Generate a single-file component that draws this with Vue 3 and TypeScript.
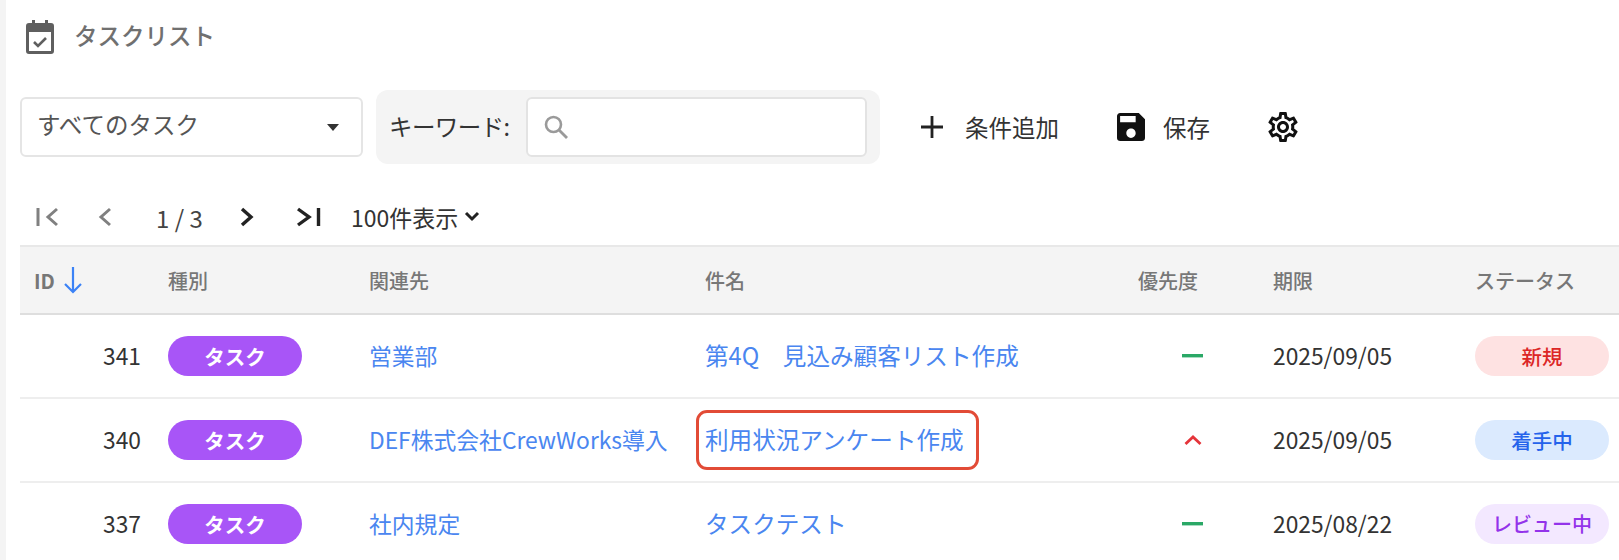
<script setup lang="ts">
interface Row { id: number; rel: string; title: string; pri: 'low' | 'high'; due: string; status: string; cls: string; boxed?: boolean }
const rows: Row[] = [
  { id: 341, rel: '営業部', title: '第4Q　見込み顧客リスト作成', pri: 'low', due: '2025/09/05', status: '新規', cls: 'new' },
  { id: 340, rel: 'DEF株式会社CrewWorks導入', title: '利用状況アンケート作成', pri: 'high', due: '2025/09/05', status: '着手中', cls: 'doing', boxed: true },
  { id: 337, rel: '社内規定', title: 'タスクテスト', pri: 'low', due: '2025/08/22', status: 'レビュー中', cls: 'review' },
]
</script>

<template>
  <div class="page">
    <div class="title">
      <svg class="cal" width="30" height="36" viewBox="0 0 30 36">
        <path fill="#5f5f5f" d="M7 1h3v3h10V1h3v3h3a3 3 0 0 1 3 3v25a3 3 0 0 1-3 3H4a3 3 0 0 1-3-3V7a3 3 0 0 1 3-3h3z" />
        <rect x="4" y="13" width="22" height="19" fill="#fff" />
        <path d="M9 23l4 4 8-8" fill="none" stroke="#5f5f5f" stroke-width="2.6" />
      </svg>
      <span>タスクリスト</span>
    </div>
    <div class="toolbar">
      <div class="select">
        <span>すべてのタスク</span>
        <i class="caret"></i>
      </div>
      <div class="kw">
        <label>キーワード:</label>
        <div class="input">
          <svg width="26" height="26" viewBox="0 0 26 26">
            <circle cx="10.500" cy="10.500" r="7.500" fill="none" stroke="#9a9a9a" stroke-width="2.600" />
            <path d="M16 16l8 8" stroke="#9a9a9a" stroke-width="2.800" />
          </svg>
        </div>
      </div>
      <button class="act add">
        <svg width="24" height="24" viewBox="0 0 24 24"><path d="M12 1v22M1 12h22" stroke="#222" stroke-width="2.800" /></svg>
        <span>条件追加</span>
      </button>
      <button class="act save">
        <svg width="28" height="28" viewBox="3 3 18 18"><path fill="#111" d="M17 3H5c-1.110 0-2 .9-2 2v14c0 1.100.89 2 2 2h14c1.100 0 2-.9 2-2V7l-4-4zm-5 16c-1.660 0-3-1.340-3-3s1.340-3 3-3 3 1.340 3 3-1.340 3-3 3zm3-10H5V5h10v4z" /></svg>
        <span>保存</span>
      </button>
      <button class="gear">
        <svg width="30" height="30" viewBox="2 2 20 20"><path fill="#111" d="M19.430 12.980c.04-.32.07-.64.07-.98 0-.34-.03-.66-.07-.98l2.110-1.650c.19-.15.24-.42.12-.64l-2-3.460c-.09-.16-.26-.25-.44-.25-.06 0-.12.01-.17.03l-2.490 1c-.52-.4-1.080-.73-1.690-.98l-.38-2.650C14.460 2.180 14.250 2 14 2h-4c-.25 0-.46.18-.49.42l-.38 2.650c-.61.25-1.170.59-1.690.98l-2.490-1c-.06-.02-.12-.03-.18-.03-.17 0-.34.09-.43.25l-2 3.460c-.13.22-.07.49.12.64l2.110 1.650c-.04.32-.07.65-.07.98 0 .33.03.66.07.98l-2.110 1.650c-.19.15-.24.42-.12.64l2 3.460c.09.16.26.25.44.25.06 0 .12-.01.17-.03l2.490-1c.52.4 1.080.73 1.690.98l.38 2.650c.03.24.24.42.49.42h4c.25 0 .46-.18.49-.42l.38-2.650c.61-.25 1.170-.59 1.690-.98l2.490 1c.06.02.12.03.18.03.17 0 .34-.09.43-.25l2-3.460c.12-.22.07-.49-.12-.64l-2.110-1.650zm-1.980-1.710c.04.31.05.52.05.73 0 .21-.02.43-.05.73l-.14 1.130.89.7 1.080.84-.7 1.210-1.270-.51-1.040-.42-.9.68c-.43.32-.84.56-1.250.73l-1.060.43-.16 1.130-.2 1.350h-1.400l-.19-1.350-.16-1.130-1.060-.43c-.43-.18-.83-.41-1.230-.71l-.91-.7-1.060.43-1.270.51-.7-1.210 1.080-.84.89-.7-.14-1.130c-.03-.31-.05-.54-.05-.74s.02-.43.05-.73l.14-1.130-.89-.7-1.080-.84.7-1.210 1.270.51 1.040.42.9-.68c.43-.32.84-.56 1.250-.73l1.060-.43.16-1.130.2-1.350h1.390l.19 1.350.16 1.130 1.060.43c.43.18.83.41 1.230.71l.91.7 1.060-.43 1.270-.51.7 1.210-1.070.85-.89.7.14 1.130zM12 8c-2.210 0-4 1.790-4 4s1.790 4 4 4 4-1.790 4-4-1.790-4-4-4zm0 6c-1.100 0-2-.9-2-2s.9-2 2-2 2 .9 2 2-.9 2-2 2z" /></svg>
      </button>
    </div>
    <div class="pager">
      <svg class="first" width="26" height="24" viewBox="0 0 26 24"><path d="M3 3v18M22 4l-9 8 9 8" fill="none" stroke="#808080" stroke-width="3" /></svg>
      <svg class="prev" width="16" height="24" viewBox="0 0 16 24"><path d="M13 4l-9 8 9 8" fill="none" stroke="#808080" stroke-width="3" /></svg>
      <span class="count">1 / 3</span>
      <svg class="next" width="16" height="24" viewBox="0 0 16 24"><path d="M3 4l9 8-9 8" fill="none" stroke="#222" stroke-width="3.400" /></svg>
      <svg class="last" width="26" height="24" viewBox="0 0 26 24"><path d="M3 4l11 8-11 8M23.500 3v18" fill="none" stroke="#222" stroke-width="3.400" /></svg>
      <span class="size">100件表示</span>
      <svg width="16" height="12" viewBox="0 0 16 12"><path d="M2 2l6 6 6-6" fill="none" stroke="#222" stroke-width="3" /></svg>
    </div>
    <div class="table">
      <div class="row head">
        <div class="c id-h">ID
          <svg width="20" height="28" viewBox="0 0 20 28"><path d="M10 1v25M2 18l8 8 8-8" fill="none" stroke="#3b82f6" stroke-width="2.200" /></svg>
        </div>
        <div class="c">種別</div>
        <div class="c">関連先</div>
        <div class="c">件名</div>
        <div class="c pri-h">優先度</div>
        <div class="c">期限</div>
        <div class="c">ステータス</div>
      </div>
      <div v-for="r in rows" :key="r.id" class="row body">
        <div class="c num">{{ r.id }}</div>
        <div class="c"><span class="pill task">タスク</span></div>
        <div class="c link rel">{{ r.rel }}</div>
        <div class="c link subject">
          <span>{{ r.title }}</span>
          <i v-if="r.boxed" class="mark"></i>
        </div>
        <div class="c pri">
          <svg v-if="r.pri === 'low'" width="21" height="4" viewBox="0 0 21 4"><rect width="21" height="3.400" fill="#2aa866" /></svg>
          <svg v-else width="20" height="12" viewBox="0 0 20 12"><path d="M2.500 10l7.500-7 7.500 7" fill="none" stroke="#e5343a" stroke-width="2.800" /></svg>
        </div>
        <div class="c date">{{ r.due }}</div>
        <div class="c"><span class="pill" :class="r.cls">{{ r.status }}</span></div>
      </div>
    </div>
  </div>
</template>

<style>
html, body { margin: 0; background: #fff; }
</style>
<style scoped>
.page { width: 1619px; height: 560px; box-sizing: border-box; overflow: hidden; padding-left: 6px; background: linear-gradient(90deg, #f4f4f4 6px, #fff 6px); font-family: "Noto Sans CJK JP", "Noto Sans", sans-serif; color: #333; font-size: 23px; }
.title { height: 73px; display: flex; align-items: center; gap: 19px; padding-left: 19px; font-size: 23.500px; font-weight: 500; color: #707070; }
.title span { margin-bottom: 4px; }
.cal { flex: none; }
.toolbar { display: flex; align-items: center; height: 74px; margin-top: 17px; padding-left: 14px; }
.select { width: 343px; height: 60px; box-sizing: border-box; border: 2px solid #e5e5e5; border-radius: 6px; display: flex; align-items: center; justify-content: space-between; padding: 0 22px 6px 15px; font-size: 23.500px; color: #555; }
.caret { width: 0; height: 0; border: 6.500px solid transparent; border-top: 7px solid #333; border-bottom: 0; margin-top: 6px; }
.kw { margin-left: 13px; width: 504px; height: 74px; box-sizing: border-box; background: #f4f4f4; border-radius: 12px; display: flex; align-items: center; padding: 0 13px; gap: 13px; }
.kw label { width: 124px; font-size: 23.500px; letter-spacing: -0.6px; color: #333; white-space: nowrap; margin-bottom: 3px; }
.input { flex: 1; height: 60px; box-sizing: border-box; background: #fff; border: 2px solid #e3e3e3; border-radius: 6px; display: flex; align-items: center; padding-left: 15px; }
.act { background: none; border: 0; padding: 0; font: inherit; font-size: 23.500px; display: flex; align-items: center; color: #333; }
.add { margin-left: 40px; gap: 21px; }
.save { margin-left: 58px; gap: 18px; }
.gear { background: none; border: 0; padding: 0; margin-left: 58px; display: flex; }
.pager { display: flex; align-items: center; height: 40px; margin-top: 33px; padding-left: 29px; font-size: 23px; }
.prev { margin-left: 36px; }
.count { margin-left: 43px; width: 45px; white-space: nowrap; color: #444; font-size: 24px; }
.next { margin-left: 38px; }
.last { margin-left: 40px; }
.size { margin-left: 30px; margin-right: 6px; color: #333; }
.table { margin-top: 8px; margin-left: 14px; }
.row { display: grid; grid-template-columns: 134px 201px 336px 420px 148px 202px 158px; align-items: center; }
.c { padding-left: 14px; box-sizing: border-box; white-space: nowrap; }
.head { height: 70px; background: #f4f4f4; border-top: 2px solid #e8e8e8; border-bottom: 2px solid #dedede; box-sizing: border-box; font-size: 20px; font-weight: 500; color: #777; }
.id-h { display: flex; align-items: center; gap: 8px; font-weight: 700; }
.pri-h { text-align: right; padding-right: 61px; }
.pri { display: flex; justify-content: flex-end; align-items: center; padding-right: 56px; }
.body { height: 84px; box-sizing: border-box; border-bottom: 2px solid #eeeeee; font-size: 22.800px; }
.num { text-align: right; padding-right: 13px; padding-bottom: 2px; }
.date { padding-bottom: 2px; }
.link { color: #4a86f0; padding-bottom: 2px; }
.subject { position: relative; font-size: 23.600px; }
.mark { position: absolute; left: 5px; top: calc(50% - 30px); width: 283px; height: 60px; box-sizing: border-box; border: 3.500px solid #e24b36; border-radius: 11px; }
.pill { display: block; width: 134px; height: 40px; line-height: 40px; text-align: center; border-radius: 20px; font-size: 20.500px; font-weight: 500; }
.task { background: #a855f7; color: #fff; font-weight: 700; }
.new { background: #fee2e2; color: #dc2626; }
.doing { background: #dbeafe; color: #2563eb; }
.review { background: #f3e8ff; color: #9333ea; font-size: 20px; }
</style>
